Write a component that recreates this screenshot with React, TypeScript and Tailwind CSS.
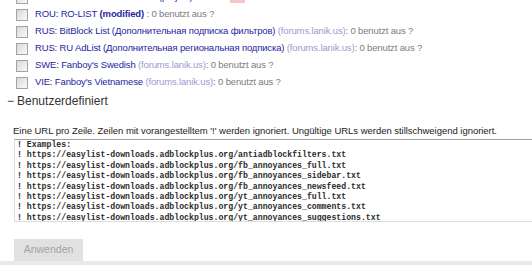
const lists = [
  { name: "ROU: RO-LIST", modified: true, forum: false },
  { name: "RUS: BitBlock List (Дополнительная подписка фильтров)", modified: false, forum: true },
  { name: "RUS: RU AdList (Дополнительная региональная подписка)", modified: false, forum: true },
  { name: "SWE: Fanboy's Swedish", modified: false, forum: true },
  { name: "VIE: Fanboy's Vietnamese", modified: false, forum: true },
];

const urls = [
  "! Examples:",
  "! https://easylist-downloads.adblockplus.org/antiadblockfilters.txt",
  "! https://easylist-downloads.adblockplus.org/fb_annoyances_full.txt",
  "! https://easylist-downloads.adblockplus.org/fb_annoyances_sidebar.txt",
  "! https://easylist-downloads.adblockplus.org/fb_annoyances_newsfeed.txt",
  "! https://easylist-downloads.adblockplus.org/yt_annoyances_full.txt",
  "! https://easylist-downloads.adblockplus.org/yt_annoyances_comments.txt",
  "! https://easylist-downloads.adblockplus.org/yt_annoyances_suggestions.txt",
];

function Box() {
  return (
    <span className="block h-[12px] w-[12px] shrink-0 border border-[#a3a3a3] bg-gradient-to-br from-[#d8d8d8] to-[#fafafa]" />
  );
}

export default function App() {
  return (
    <div className="flex h-[265px] w-[532px] flex-col overflow-hidden bg-white font-['Liberation_Sans',Arial,sans-serif] text-[9.5px]">
      <div className="-mt-[11px] flex flex-col tracking-[-0.15px]">
        {/* partly scrolled-out row */}
        <div className="flex h-[17px] items-center pl-[16px]">
          <Box />
          <span className="ml-[7px] w-[188px] overflow-hidden whitespace-nowrap text-[#2a2aa4]">POL: Polish filters for AdBlock (project)</span>
          <span className="ml-[7px] h-[10px] w-[15px] bg-[#f4c6c6]" />
        </div>
        {lists.map((l) => (
          <div key={l.name} className="flex h-[17px] items-center pl-[16px]">
            <Box />
            <span className="ml-[7px] whitespace-nowrap text-[#2525a0]">
              {l.name}
              {l.modified && <b> (modified)</b>}
              {l.forum && <span className="text-[#9a9ad0]"> (forums.lanik.us)</span>}
              <span className="text-[#7c7c7c]">{l.modified ? " : " : ": "}0 benutzt aus ?</span>
            </span>
          </div>
        ))}
      </div>

      <div className="mt-[2px] flex h-[15px] items-center pl-[7px] text-[12px] text-[#333]">
        <span className="mr-[3px]">−</span>
        <span>Benutzerdefiniert</span>
      </div>

      <div className="mt-[16px] h-[14px] whitespace-nowrap pl-[13px] leading-[14px] tracking-[-0.03px] text-[#222]">
        Eine URL pro Zeile. Zeilen mit vorangestelltem '!' werden ignoriert. Ungültige URLs werden stillschweigend ignoriert.
      </div>

      <div className="ml-[14px] mt-[1px] h-[83px] overflow-hidden border-t border-l border-b border-t-[#a0a0a0] border-l-[#dcdcdc] border-b-[#dcdcdc] pl-[2px] font-['Liberation_Mono','Courier_New',monospace] text-[8.2px] font-bold leading-[10.4px] text-[#2a2a2a]">
        {urls.map((u) => (
          <div key={u} className="whitespace-pre">{u}</div>
        ))}
      </div>

      <div className="mt-[17px] pl-[14px]">
        <button className="h-[22px] w-[69px] bg-[#e1e1e1] text-[10.5px] text-[#a3a3a3]">Anwenden</button>
      </div>
      <div className="h-[4px] w-full bg-[#e9e9e9]" />
    </div>
  );
}
